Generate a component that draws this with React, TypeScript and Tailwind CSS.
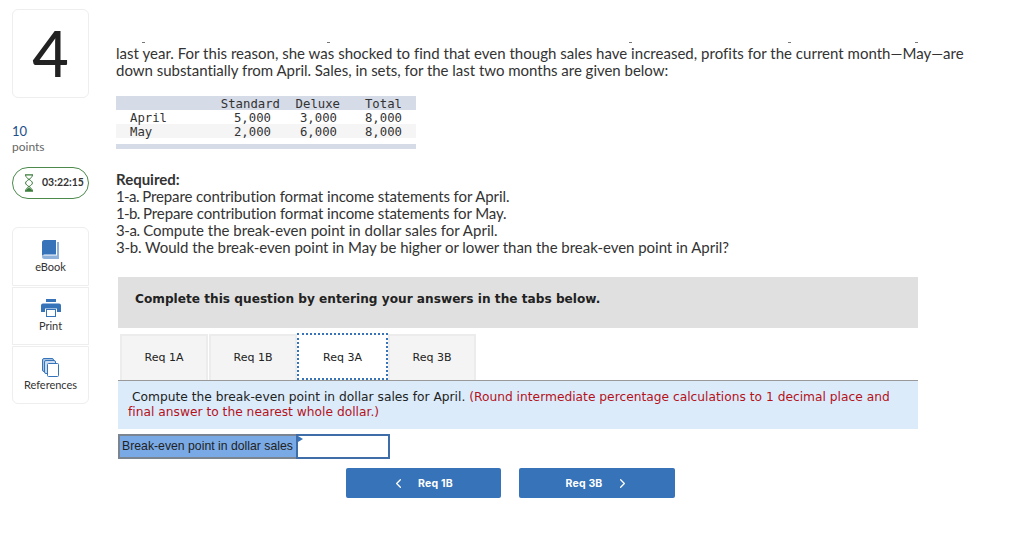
import { ChevronLeft, ChevronRight } from "lucide-react";

const body = "font-['Lato','Liberation_Sans',sans-serif] [font-variant-ligatures:none]";
const verdana = "font-['DejaVu_Sans',sans-serif]";

const rows = [
  { label: "", a: "Standard", b: "Deluxe", c: "Total", bg: "bg-[#d5dbe7]", pa: "pr-0", pb: "pr-0" },
  { label: "April", a: "5,000", b: "3,000", c: "8,000", bg: "bg-white", pa: "pr-[9px]", pb: "pr-[3px]" },
  { label: "May", a: "2,000", b: "6,000", c: "8,000", bg: "bg-[#f5f5f5]", pa: "pr-[9px]", pb: "pr-[3px]" },
];

const requirements = [
  { tag: "1-a.", tagClass: "tracking-[-0.6px]", text: "Prepare contribution format income statements for April.", textClass: "tracking-[-0.09px]" },
  { tag: "1-b.", tagClass: "tracking-[-0.6px]", text: "Prepare contribution format income statements for May.", textClass: "tracking-[-0.12px]" },
  { tag: "3-a.", tagClass: "tracking-[-0.4px]", text: "Compute the break-even point in dollar sales for April.", textClass: "tracking-[0.01px]" },
  { tag: "3-b.", tagClass: "tracking-[-0.2px]", text: "Would the break-even point in May be higher or lower than the break-even point in April?", textClass: "tracking-[-0.03px]" },
];

function BookIcon() {
  return (
    <svg width="17" height="19" viewBox="0 0 17 19">
      <path d="M0 2.500A2.500 2.500 0 0 1 2.500 0H14v14.500H2.500A2.500 2.500 0 0 0 0 16.500z" fill="#3673b8" />
      <path d="M15 2h2v17H2.500A2.500 2.500 0 0 1 0 16.500 2 2 0 0 1 2.500 15.500H15z" fill="#8fb2da" />
    </svg>
  );
}

function PrintIcon() {
  return (
    <svg width="20" height="18" viewBox="0 0 20 18">
      <rect x="5" y="0" width="10" height="3" fill="#3673b8" />
      <path d="M2 4.500h16a2 2 0 0 1 2 2V13h-4V9.500H4V13H0V6.500a2 2 0 0 1 2-2z" fill="#3673b8" />
      <rect x="5.500" y="10.500" width="9" height="7" fill="#fff" stroke="#3673b8" />
    </svg>
  );
}

function ReferencesIcon() {
  return (
    <svg width="17" height="19" viewBox="0 0 17 19" fill="none">
      <rect x="0.500" y="0.500" width="11" height="13" rx="1.500" fill="#a9c3e2" stroke="#3673b8" />
      <rect x="2.500" y="2.500" width="11" height="13" rx="1.500" fill="#cddcee" stroke="#3673b8" />
      <rect x="5.500" y="5.500" width="11" height="13" rx="1" fill="#fff" stroke="#3673b8" />
    </svg>
  );
}

function HourglassIcon() {
  return (
    <svg width="10" height="18" viewBox="0 0 10 18" fill="none">
      <path d="M1 .8h8M1 17.200h8" stroke="#3b7d3b" strokeWidth="1.200" />
      <path d="M1.600 1c0 4 6.800 5 6.800 8s-6.800 4-6.800 8M8.400 1c0 4-6.800 5-6.800 8s6.800 4 6.800 8" stroke="#3b7d3b" strokeWidth="1" />
      <path d="M1.800 17c.5-2 2-3 3.200-3s2.700 1 3.200 3z" fill="#3b7d3b" />
    </svg>
  );
}

function Sidebar() {
  const tools = [
    { label: "eBook", icon: <BookIcon />, cls: "h-[59px] rounded-t-md pt-[11px]" },
    { label: "Print", icon: <PrintIcon />, cls: "h-[58px] pt-[10px]" },
    { label: "References", icon: <ReferencesIcon />, cls: "h-[58px] rounded-b-md pt-[10px]" },
  ];
  return (
    <aside className="flex w-[116px] shrink-0 flex-col pl-3 pr-[27px] pt-[9px]">
      <div className="flex h-[89px] items-center justify-center rounded-md border border-[#eeeeee] pb-[2px] text-[63px] font-medium leading-none text-[#222]">
        4
      </div>
      <div className="mt-[25px] text-[13px] leading-4 text-[#1e4e8c]">10</div>
      <div className="text-[12px] leading-4 text-[#666]">points</div>
      <div className="mt-[12px] flex h-[32px] items-center gap-[8px] rounded-[16px] border border-[#4c8a4c] pl-[11px]">
        <HourglassIcon />
        <span className="text-[10.500px] font-bold text-[#333]">03:22:15</span>
      </div>
      <div className="mt-[28px] flex flex-col gap-px">
        {tools.map((tool) => (
          <div
            key={tool.label}
            className={`flex flex-col items-center justify-start border border-[#eeeeee] ${tool.cls}`}
          >
            <div className="flex h-[20px] items-center">{tool.icon}</div>
            <div className="mt-px text-[11px] leading-[14px] text-[#333]">{tool.label}</div>
          </div>
        ))}
      </div>
    </aside>
  );
}

function SalesTable() {
  return (
    <div className="mt-[17px] w-[300px] font-['DejaVu_Sans_Mono',monospace] text-[12.300px] leading-[13px] text-[#333]">
      {rows.map((r) => (
        <div key={r.c + r.label} className={`flex h-[14px] pt-[2px] ${r.bg}`}>
          <span className="w-[64px] pl-[14px]">{r.label}</span>
          <span className={`w-[100px] text-right ${r.pa}`}>{r.a}</span>
          <span className={`w-[60px] text-right ${r.pb}`}>{r.b}</span>
          <span className="w-[62px] text-right">{r.c}</span>
        </div>
      ))}
      <div className="mt-[6px] h-[5px] bg-[#d5dbe7]" />
    </div>
  );
}

function Tabs() {
  const tabs = ["Req 1A", "Req 1B", "Req 3A", "Req 3B"];
  return (
    <div className="ml-[4px] mt-[6px] flex h-[46px] items-stretch">
      {tabs.map((t) =>
        t === "Req 3A" ? (
          <div
            key={t}
            className="relative z-10 -ml-px -mt-px flex h-[47px] w-[91px] items-center justify-center border-2 border-dotted border-[#3673b8] bg-white pt-px text-[11px]"
          >
            {t}
          </div>
        ) : (
          <div
            key={t}
            className="mr-px flex w-[88px] items-center justify-center border-2 border-b-0 border-[#ececec] bg-[#f4f4f4] pb-px text-[11px]"
          >
            {t}
          </div>
        ),
      )}
    </div>
  );
}

function NavButton({ dir, label, width }: { dir: "prev" | "next"; label: string; width: string }) {
  return (
    <div className={`flex h-[30px] items-center justify-center gap-[12px] rounded-[2px] bg-[#3673b8] font-['Inter',sans-serif] text-[10.500px] font-bold tracking-[0.2px] text-white ${width}`}>
      {dir === "prev" && <ChevronLeft size={15} strokeWidth={2} />}
      <span>{label}</span>
      {dir === "next" && <ChevronRight size={15} strokeWidth={2} />}
    </div>
  );
}

export default function App() {
  return (
    <div className={`flex h-[546px] w-[1024px] overflow-hidden bg-white ${body}`}>
      <Sidebar />
      <main className="relative w-[908px] pt-[45px] text-[15px] leading-[17px] text-[#333]">
        {/* bottoms of the line cut off above the visible text */}
        <span className="absolute left-[26px] top-[42px] h-px w-[3px] bg-[#777]" />
        <span className="absolute left-[211px] top-[42px] h-px w-[3px] bg-[#777]" />
        <span className="absolute left-[513px] top-[42px] h-px w-[3px] bg-[#777]" />
        <span className="absolute left-[672px] top-[42px] h-px w-[3px] bg-[#777]" />
        <span className="absolute left-[799px] top-[42px] h-px w-[3px] bg-[#777]" />
        <p>
          <span className="tracking-[0.02px]">
            last year. For this reason, she was shocked to find that even though sales have increased, profits for the
            current month—May—are
          </span>
          <br />
          <span className="tracking-[-0.02px]">
            down substantially from April. Sales, in sets, for the last two months are given below:
          </span>
        </p>
        <SalesTable />
        <div className="mt-[22px]">
          <div className="font-bold">Required:</div>
          {requirements.map((r) => (
            <div key={r.tag}>
              <span className={r.tagClass}>{r.tag} </span>
              <span className={r.textClass}>{r.text}</span>
            </div>
          ))}
        </div>
        <div className={`ml-[2px] mt-[21px] flex h-[51px] w-[800px] items-center bg-[#e0e0e0] pb-[7px] pl-[17px] text-[12.150px] font-bold text-[#222] ${verdana}`}>
          Complete this question by entering your answers in the tabs below.
        </div>
        <div className={`${verdana} text-[#222]`}>
          <Tabs />
          <div className="ml-[2px] h-[49px] w-[800px] border-t border-[#999] bg-[#dbebfa] pl-[10px] pt-[9px] text-[12.250px] leading-[15px]">
            <span className="pl-[4px]">Compute the break-even point in dollar sales for April.</span>{" "}
            <span className="text-[#b5121b]">(Round intermediate percentage calculations to 1 decimal place and</span>
            <br />
            <span className="text-[#b5121b]">final answer to the nearest whole dollar.)</span>
          </div>
        </div>
        <div className="ml-[2px] mt-[5px] flex h-[25px] w-[272px] font-['Liberation_Sans',sans-serif] text-[12.250px] text-[#222]">
          <div className="flex w-[178px] items-center border-2 border-r-0 border-[#7b8592] bg-[#7aaae6] pl-[2px]">Break-even point in dollar sales</div>
          <div className="relative flex-1 border-2 border-[#3e6da8] bg-white">
            <span className="absolute left-0 top-0 border-y-[3px] border-l-[5px] border-y-transparent border-l-[#3673b8]" />
          </div>
        </div>
        <div className="ml-[230px] mt-[9px] flex gap-[18px]">
          <NavButton dir="prev" label="Req 1B" width="w-[155px] pr-[3px]" />
          <NavButton dir="next" label="Req 3B" width="w-[156px] pl-px" />
        </div>
      </main>
    </div>
  );
}
